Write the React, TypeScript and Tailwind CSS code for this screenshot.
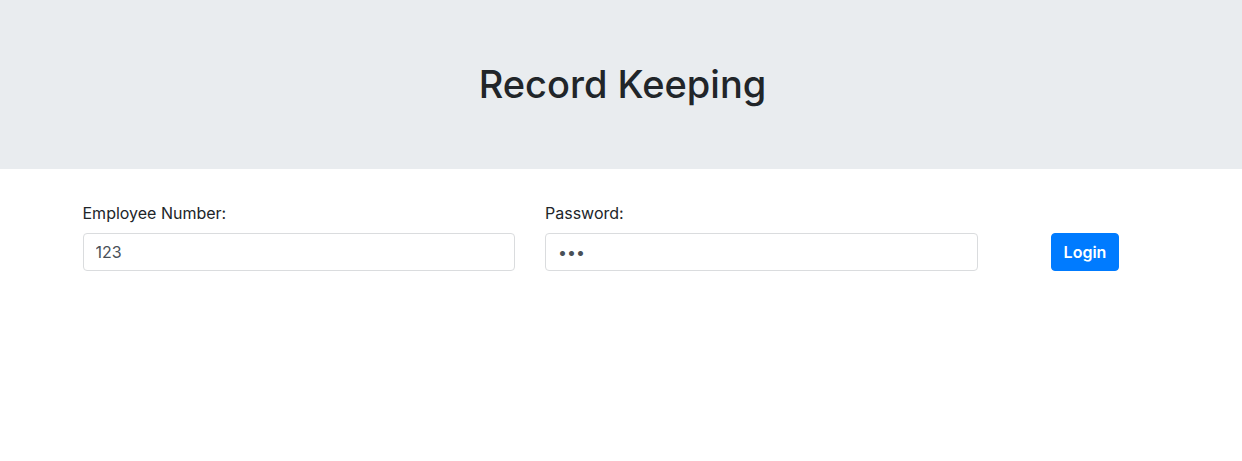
import { useState, type FormEvent } from "react";

const inputClass =
  "h-[38px] w-full rounded border border-[#dadcde] bg-white px-3 text-base leading-6 text-[#495057] outline-none focus:border-[#80bdff]";

export default function App() {
  const [employee, setEmployee] = useState("123");
  const [password, setPassword] = useState("123");

  const handleSubmit = (event: FormEvent) => event.preventDefault();

  return (
    <div className="font-['Inter','Liberation_Sans',sans-serif] text-base text-[#212529]">
      <header className="bg-[#e9ecef] pt-15 pb-[61px] pl-[3px]">
        <h1 className="text-center text-[38px] leading-12 font-medium">Record Keeping</h1>
      </header>
      <main className="pt-8 pl-[3px]">
        <form
          className="mx-auto grid max-w-[1110px] grid-cols-12 items-end gap-x-[30px] px-[15px]"
          onSubmit={handleSubmit}
        >
          <div className="col-span-5">
            <label htmlFor="employee" className="mb-2 block leading-6">
              Employee Number:
            </label>
            <input
              id="employee"
              type="text"
              className={inputClass}
              value={employee}
              onChange={(event) => setEmployee(event.target.value)}
            />
          </div>
          <div className="col-span-5">
            <label htmlFor="password" className="mb-2 block leading-6">
              Password:
            </label>
            <input
              id="password"
              type="password"
              className={inputClass}
              value={password}
              onChange={(event) => setPassword(event.target.value)}
            />
          </div>
          <div className="col-span-2 flex justify-center">
            <button
              type="submit"
              className="h-[38px] rounded border border-[#007bff] bg-[#007bff] px-3 leading-6 font-semibold text-white"
            >
              Login
            </button>
          </div>
        </form>
      </main>
    </div>
  );
}
